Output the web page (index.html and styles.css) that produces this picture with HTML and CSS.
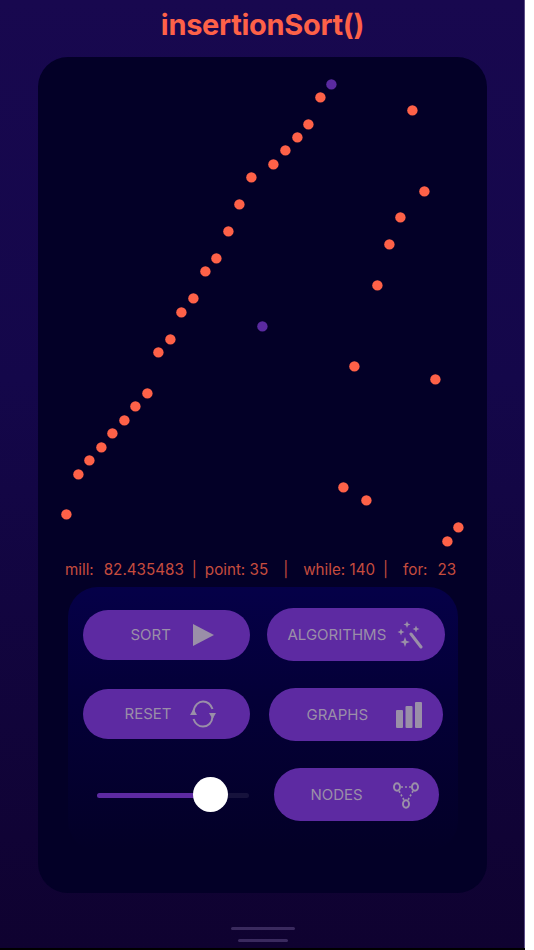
FILE: index.html
```html
<!DOCTYPE html>
<html lang="en">
<head>
<meta charset="utf-8">
<title>insertionSort()</title>
<link rel="stylesheet" href="styles.css">
</head>
<body>
<main class="screen">
  <h1 class="title">insertionSort()</h1>
  <section class="panel">
    <svg class="plot" viewBox="-0.4 -0.4 449 500" aria-hidden="true">
      <g class="dot">
        <circle cx="28" cy="457" r="5.2"/><circle cx="40" cy="417" r="5.2"/><circle cx="51" cy="403" r="5.2"/><circle cx="63" cy="390" r="5.2"/><circle cx="74" cy="376" r="5.2"/><circle cx="86" cy="363" r="5.2"/><circle cx="97" cy="349" r="5.2"/><circle cx="109" cy="336" r="5.2"/><circle cx="120" cy="295" r="5.2"/><circle cx="132" cy="282" r="5.2"/><circle cx="143" cy="255" r="5.2"/><circle cx="155" cy="241" r="5.2"/><circle cx="167" cy="214" r="5.2"/><circle cx="178" cy="201" r="5.2"/><circle cx="190" cy="174" r="5.2"/><circle cx="201" cy="147" r="5.2"/><circle cx="213" cy="120" r="5.2"/><circle cx="235" cy="107" r="5.2"/><circle cx="247" cy="93" r="5.2"/><circle cx="259" cy="80" r="5.2"/><circle cx="270" cy="67" r="5.2"/><circle cx="282" cy="40" r="5.2"/><circle cx="305" cy="430" r="5.2"/><circle cx="316" cy="309" r="5.2"/><circle cx="328" cy="443" r="5.2"/><circle cx="339" cy="228" r="5.2"/><circle cx="351" cy="187" r="5.2"/><circle cx="362" cy="160" r="5.2"/><circle cx="374" cy="53" r="5.2"/><circle cx="386" cy="134" r="5.2"/><circle cx="397" cy="322" r="5.2"/><circle cx="409" cy="484" r="5.2"/><circle cx="420" cy="470" r="5.2"/>
      </g>
      <g class="dot-active">
        <circle cx="293" cy="27" r="5.2"/><circle cx="224" cy="269" r="5.2"/>
      </g>
    </svg>
    <p class="stats"><span>mill:</span><span>82.435483</span><span class="narrow">|</span><span class="narrow">point: 35</span><span class="wide">|</span><span class="wide">while: 140</span><span class="narrow">|</span><span class="wide">for:</span><span>23</span></p>
    <div class="controls">
      <div class="column column-left">
        <button class="pill pill-sort"><span>SORT</span>
          <svg class="icon" viewBox="0 0 21 22"><path class="fill" d="M0 0 L21 11 L0 22 Z"/></svg>
        </button>
        <button class="pill pill-reset"><span>RESET</span>
          <svg class="icon" viewBox="0 0 26 28"><path class="line" d="M3.500 12 C4 5 9 1.500 13 1.500 C18 1.500 21 5 22.500 9 M22.500 17 C22 23 18 26.500 13 26.500 C8 26.500 5 23 3.500 19"/><path class="fill" d="M0 15 L3.500 9 L7 15 Z M19 13 L26 13 L22.500 19 Z"/></svg>
        </button>
        <div class="slider"><div class="slider-fill"></div><div class="slider-thumb"></div></div>
      </div>
      <div class="column column-right">
        <button class="pill pill-algo"><span>ALGORITHMS</span>
          <svg class="icon" viewBox="0 0 26 28"><path class="fill" d="M10 0 L11 2.500 L13.500 3.500 L11 4.500 L10 7 L9 4.500 L6.500 3.500 L9 2.500 Z M19 4.500 L20 7 L22.500 8 L20 9 L19 11.500 L18 9 L15.500 8 L18 7 Z M4 7.500 L5 10 L7.500 11 L5 12 L4 14.500 L3 12 L0.500 11 L3 10 Z M8 16 L9.300 19.700 L13 21 L9.300 22.300 L8 26 L6.700 22.300 L3 21 L6.700 19.700 Z"/><path class="wand" d="M14 13 L24 26"/></svg>
        </button>
        <button class="pill pill-graphs"><span>GRAPHS</span>
          <svg class="icon" viewBox="0 0 26 26"><rect class="fill" x="0" y="8" width="7" height="18" rx="1"/><rect class="fill" x="9.500" y="4" width="7" height="22" rx="1"/><rect class="fill" x="19" y="0" width="7" height="26" rx="1"/></svg>
        </button>
        <button class="pill pill-nodes"><span>NODES</span>
          <svg class="icon" viewBox="0 0 26 28"><ellipse class="line" cx="4" cy="6" rx="3" ry="3.800"/><ellipse class="line" cx="22" cy="6" rx="3" ry="3.800"/><ellipse class="line" cx="13" cy="23" rx="3" ry="3.800"/><path class="line dotted" d="M8 6 L18 6 M6 10 L11 19 M20 10 L15 19"/></svg>
        </button>
      </div>
    </div>
  </section>
  <div class="handles"><i class="handle handle-long"></i><i class="handle handle-short"></i></div>
</main>
</body>
</html>
```
FILE: styles.css
```css
* { box-sizing: border-box; }
html, body { margin: 0; height: 100%; background: #fff; }
body { width: 534px; height: 950px; overflow: hidden; }
.screen {
  width: 525px;
  height: 950px;
  padding-top: 10px;
  border-bottom: 2px solid #000;
  box-shadow: inset -1px 0 0 #5d4f86;
  display: flex;
  flex-direction: column;
  align-items: center;
  background: linear-gradient(180deg, #18084f 0%, #14074a 40%, #0f0230 100%);
  font-family: Inter, "Liberation Sans", sans-serif;
}
.title {
  margin: 0;
  height: 47px;
  color: #fe6148;
  font-size: 29px;
  line-height: 30px;
  font-weight: 700;
  letter-spacing: -0.3px;
}
.panel {
  width: 449px;
  height: 836px;
  border-radius: 30px;
  background: #030027;
  display: flex;
  flex-direction: column;
  align-items: center;
}
.plot { display: block; width: 449px; height: 500px; flex: none; }
.dot circle { fill: #fe6148; }
.dot-active circle { fill: #5a2aa0; }
.stats {
  margin: 3px 0 0;
  height: 27px;
  width: 100%;
  padding-left: 27px;
  display: flex;
  color: #c64c3e;
  font-size: 15.2px;
  line-height: 20px;
  white-space: nowrap;
}
.stats span { margin-left: 10px; }
.stats span:first-child { margin-left: 0; }
.stats .narrow { margin-left: 8px; }
.stats .wide { margin-left: 15px; }
.controls {
  width: 390px;
  height: 264px;
  border-radius: 30px;
  background: linear-gradient(180deg, #050048 0%, #040038 40%, #030027 100%);
  display: flex;
  justify-content: space-between;
  padding: 21px 13px 0 15px;
}
.column { display: flex; flex-direction: column; }
.column-left { width: 167px; }
.column-right { width: 178px; align-items: flex-end; }
.pill {
  border: 0;
  padding: 0;
  display: flex;
  align-items: center;
  background: #5d2aa2;
  border-radius: 27px;
  color: #9a8fa8;
  font-family: inherit;
  font-size: 15px;
  line-height: 20px;
}
.icon { flex: none; }
.pill-sort { width: 167px; height: 50px; margin-top: 2px; padding-left: 48px; }
.pill-sort .icon { width: 21px; height: 22px; margin-left: 22px; }
.pill-reset { width: 167px; height: 50px; margin-top: 29px; padding-left: 42px; }
.pill-reset .icon { width: 26px; height: 28px; margin-left: 18px; }
.slider {
  width: 152px;
  height: 5px;
  margin-top: 54px;
  margin-left: 14px;
  border-radius: 3px;
  background: #16123c;
  position: relative;
}
.slider-fill { width: 112px; height: 100%; border-radius: 3px; background: #5d2aa2; }
.slider-thumb {
  position: absolute;
  left: 96px;
  top: -16px;
  width: 35px;
  height: 35px;
  border-radius: 50%;
  background: #fff;
}
.pill-algo { width: 178px; height: 53px; padding-left: 21px; }
.pill-algo .icon { width: 26px; height: 28px; margin-left: 11px; }
.pill-graphs { width: 174px; height: 53px; margin-top: 27px; margin-right: 2px; padding-left: 38px; }
.pill-graphs .icon { width: 26px; height: 26px; margin-left: 28px; }
.pill-nodes { width: 165px; height: 53px; margin-top: 27px; margin-right: 6px; padding-left: 37px; }
.pill-nodes .icon { width: 26px; height: 28px; margin-left: 30px; }
.fill { fill: #9a8fa8; }
.line { fill: none; stroke: #9a8fa8; stroke-width: 2; }
.dotted { stroke-dasharray: 2 2; stroke-width: 1.6; }
.wand { fill: none; stroke: #9a8fa8; stroke-width: 3; stroke-linecap: round; }
.handles {
  margin-top: 34px;
  display: flex;
  flex-direction: column;
  align-items: center;
  gap: 9px;
}
.handle { display: block; height: 3px; border-radius: 2px; background: #3a2a5e; }
.handle-long { width: 64px; }
.handle-short { width: 50px; }
```
